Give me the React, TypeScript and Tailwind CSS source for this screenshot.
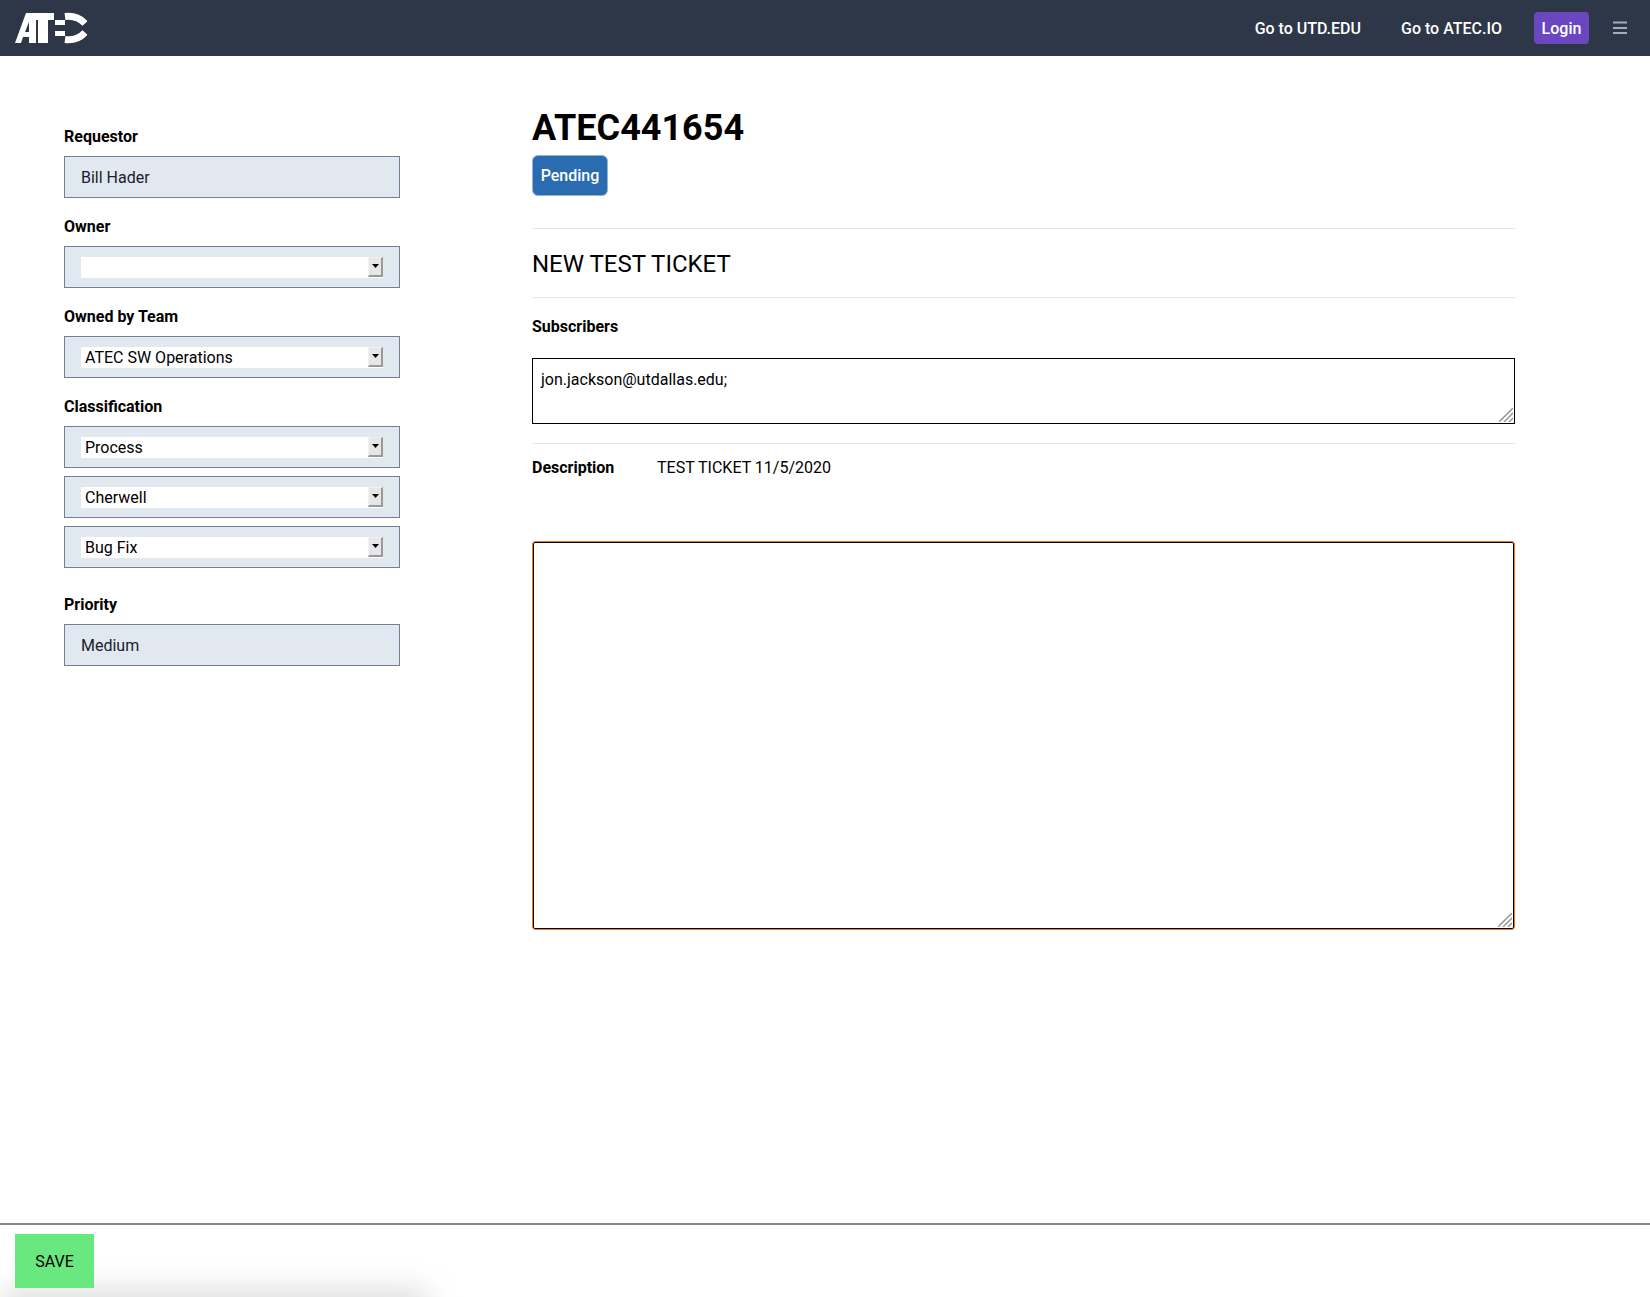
import React from "react";

function Logo() {
  return (
    <svg width="72" height="32" viewBox="0 0 72 32" className="block">
      <path fill="#fff" fillRule="evenodd" d="M0 31 L11 1 L21 1 L21 31 L14 31 L14 25 L8 25 L6 31 Z M10 20 L14 20 L14 10 Z" />
      <path fill="#fff" d="M21 1 L39 1 L39 8 L33 8 L33 31 L23 31 L23 8 L21 8 Z" />
      <path fill="#fff" d="M40 8 L50 8 L50 13 L40 13 Z M40 19 L50 19 L50 24 L40 24 Z" />
      <path fill="none" stroke="#fff" strokeWidth="7" d="M50 4.5 C58 3.5 65 6 70 11.5 M50 27.5 C58 28.5 65 26 70 20.5" />
    </svg>
  );
}

function Label({ children }: { children: React.ReactNode }) {
  return <div className="h-[24px] leading-[24px] text-base font-bold text-black">{children}</div>;
}

function ReadOnly({ value }: { value: string }) {
  return (
    <div className="h-[42px] border border-[#718096] bg-[#e2e8f0] pl-[16px] pt-[2px] flex items-center text-base text-[#1a202c]">
      {value}
    </div>
  );
}

function Select({ value }: { value?: string }) {
  return (
    <div className="h-[42px] border border-[#718096] bg-[#e2e8f0] pl-[16px] pr-[16px] flex items-center">
      <div className="flex-1 h-[21px] bg-white pl-[4px] flex justify-between text-base text-black leading-[21px]">
        <span>{value}</span>
        <span className="w-[15px] h-[20px] bg-[#e6e6e6] border-t border-l border-t-[#f2f2f2] border-l-[#f2f2f2] border-r-2 border-b-2 border-r-[#9a9a9a] border-b-[#9a9a9a] flex items-center justify-center">
          <svg width="7" height="4" viewBox="0 0 7 4"><path d="M0 0h7L3.5 4z" fill="#000" /></svg>
        </span>
      </div>
    </div>
  );
}

function Grip() {
  return (
    <svg className="absolute right-[2px] bottom-[2px]" width="14" height="14" viewBox="0 0 14 14">
      <path d="M14 0L0 14M14 5L5 14M14 10L10 14" stroke="#8f8f8f" strokeWidth="1.4" fill="none" />
    </svg>
  );
}

export default function App() {
  return (
    <div className="relative h-[1297px] bg-white flex flex-col overflow-hidden font-['Roboto',sans-serif] text-black">
      <header className="h-[56px] shrink-0 bg-[#2d3748] flex items-center pl-[15px] pr-[23px]">
        <Logo />
        <nav className="ml-auto flex items-center text-base font-medium text-white">
          <span className="pt-[2px]">Go to UTD.EDU</span>
          <span className="ml-[40px] pt-[2px]">Go to ATEC.IO</span>
          <span className="ml-[32px] w-[55px] h-[32px] pt-[2px] rounded bg-[#6b46c1] flex items-center justify-center">Login</span>
          <svg className="ml-[24px]" width="14" height="14" viewBox="0 0 14 14">
            <path d="M0 0.5h14v2H0zM0 6h14v2H0zM0 11h14v2H0z" fill="#a0aec0" />
          </svg>
        </nav>
      </header>

      <main className="flex-1 flex items-start pl-[64px]">
        <aside className="w-[336px] shrink-0 pt-[69px]">
          <Label>Requestor</Label>
          <div className="mt-[7px]"><ReadOnly value="Bill Hader" /></div>
          <div className="mt-[17px]"><Label>Owner</Label></div>
          <div className="mt-[7px]"><Select /></div>
          <div className="mt-[17px]"><Label>Owned by Team</Label></div>
          <div className="mt-[7px]"><Select value="ATEC SW Operations" /></div>
          <div className="mt-[17px]"><Label>Classification</Label></div>
          <div className="mt-[7px] flex flex-col gap-[8px]">
            <Select value="Process" />
            <Select value="Cherwell" />
            <Select value="Bug Fix" />
          </div>
          <div className="mt-[25px]"><Label>Priority</Label></div>
          <div className="mt-[7px]"><ReadOnly value="Medium" /></div>
        </aside>

        <section className="w-[984px] ml-[132px] pt-[48px]">
          <h1 className="text-[36px] leading-[48px] font-bold">ATEC441654</h1>
          <div className="mt-[3px] w-[76px] h-[41px] rounded-[6px] bg-[#2b6cb0] border border-[#90b4d8] flex items-center justify-center text-base font-medium text-white">
            Pending
          </div>
          <div className="mt-[32px] h-px bg-[#e2e8f0]" />
          <div className="mt-[19px] h-[32px] leading-[32px] text-[24px]">NEW TEST TICKET</div>
          <div className="mt-[17px] h-px bg-[#e2e8f0]" />
          <div className="mt-[17px]"><Label>Subscribers</Label></div>
          <div className="relative mt-[19px] w-[983px]">
            <textarea
              readOnly
              defaultValue="jon.jackson@utdallas.edu;"
              className="block w-full h-[66px] resize-none border border-black px-[8px] pt-[9px] text-base leading-[24px] outline-none"
            />
            <Grip />
          </div>
          <div className="mt-[19px] h-px w-[983px] bg-[#e2e8f0]" />
          <div className="mt-[12px] flex text-base leading-[24px]">
            <span className="w-[125px] font-bold">Description</span>
            <span>TEST TICKET 11/5/2020</span>
          </div>
          <div className="relative mt-[62px] ml-px w-[981px]">
            <textarea
              readOnly
              className="block w-full h-[387px] resize-none rounded-[2px] border border-black outline outline-1 outline-[#f5791f]"
            />
            <Grip />
          </div>
        </section>
      </main>

      <footer className="relative h-[74px] shrink-0 border-t-2 border-[#888888] pl-[15px] pt-[10px] bg-white">
        <div className="absolute left-0 bottom-[-22px] w-[430px] h-[30px] bg-[#dddddd] blur-[14px] rounded-full" />
        <div className="relative w-[79px] h-[54px] -mt-px pt-[2px] bg-[#68e87e] flex items-center justify-center text-base">SAVE</div>
      </footer>
    </div>
  );
}
